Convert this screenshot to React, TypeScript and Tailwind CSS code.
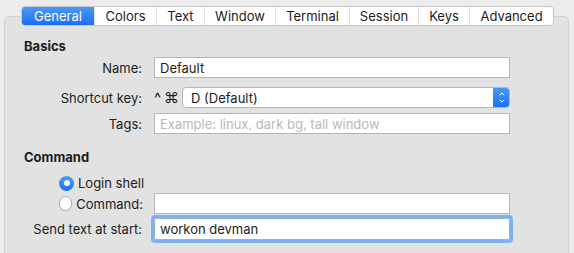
import { ChevronUp, ChevronDown } from 'lucide-react'

const tabs = [
  { label: 'General', w: 'w-[72px]' },
  { label: 'Colors', w: 'w-[62px]' },
  { label: 'Text', w: 'w-[48px]' },
  { label: 'Window', w: 'w-[71px]' },
  { label: 'Terminal', w: 'w-[74px]' },
  { label: 'Session', w: 'w-[69px]' },
  { label: 'Keys', w: 'w-[51px]' },
  { label: 'Advanced', w: 'w-[84px]' },
]

function Label({ children }: { children: React.ReactNode }) {
  return <div className="w-[138px] shrink-0 text-right pr-px">{children}</div>
}

function Field({ value, placeholder }: { value?: string; placeholder?: string }) {
  return (
    <div className="w-[356px] h-[21px] bg-white border border-[#b5b5b5] flex items-center px-[5px]">
      {value ? (
        <span className="text-[#1c1c1c]">{value}</span>
      ) : (
        <span className="text-[#b9b9b9]">{placeholder}</span>
      )}
    </div>
  )
}

function Radio({ checked, label }: { checked?: boolean; label: string }) {
  return (
    <div className="flex items-center gap-[4px]">
      {checked ? (
        <span className="w-[15px] h-[15px] rounded-full bg-gradient-to-b from-[#4d9bf9] to-[#1f72f4] flex items-center justify-center">
          <span className="w-[6px] h-[6px] rounded-full bg-white" />
        </span>
      ) : (
        <span className="w-[15px] h-[15px] rounded-full bg-white border border-[#a9a9a9]" />
      )}
      <span>{label}</span>
    </div>
  )
}

export default function App() {
  return (
    <div
      className="relative w-[574px] h-[253px] bg-[#ececec] overflow-hidden text-[13px] leading-[16px] text-[#1c1c1c]"
      style={{ fontFamily: 'Inter, "Noto Sans", sans-serif' }}
    >
      <div className="ml-[4px] mt-[16px] w-[565px] h-[260px] bg-[#e2e2e2] border border-[#d0d0d0] rounded-[5px] pt-[21px]">
        <div className="font-bold pl-[19px]">Basics</div>

        <div className="mt-[3px] flex items-center gap-[11px]">
          <Label>Name:</Label>
          <Field value="Default" />
        </div>

        <div className="mt-[9px] flex items-center gap-[11px]">
          <Label>Shortcut key:</Label>
          <div className="flex items-center">
            <span className="w-[28px] flex items-center gap-[3px] text-[15px]">
              <span>^</span>
              <span>⌘</span>
            </span>
            <div className="w-[328px] h-[21px] bg-white border border-[#b5b5b5] rounded-[4px] flex items-center overflow-hidden">
              <span className="flex-1 pl-[8px]">D (Default)</span>
              <div className="w-[17px] h-[21px] -mr-px bg-gradient-to-b from-[#4a99f9] to-[#1c6ef5] rounded-r-[4px] flex flex-col items-center justify-center">
                <ChevronUp className="w-[10px] h-[8px] text-white -mb-[1px]" strokeWidth={3} />
                <ChevronDown className="w-[10px] h-[8px] text-white" strokeWidth={3} />
              </div>
            </div>
          </div>
        </div>

        <div className="mt-[5px] flex items-center gap-[11px]">
          <Label>Tags:</Label>
          <Field placeholder="Example: linux, dark bg, tall window" />
        </div>

        <div className="mt-[15px] font-bold pl-[19px]">Command</div>

        <div className="mt-[10px] pl-[54px]">
          <Radio checked label="Login shell" />
        </div>

        <div className="mt-[2px] flex items-center">
          <div className="w-[138px] pl-[54px]">
            <Radio label="Command:" />
          </div>
          <div className="ml-[11px]">
            <Field />
          </div>
        </div>

        <div className="mt-[4px] flex items-center gap-[11px]">
          <Label>Send text at start:</Label>
          <div className="w-[356px] h-[22px] bg-white border border-[#8fb5e6] rounded-[1px] outline-[3px] outline-[#7eb1ee] flex items-center px-[5px]">
            workon devman
          </div>
        </div>
      </div>

      <div className="absolute left-[21px] top-[6px] flex h-[20px] bg-white border border-[#c6c6c6] rounded-[4px] overflow-hidden">
        {tabs.map((t, i) => (
          <div
            key={t.label}
            className={
              t.w +
              ' flex items-center justify-center ' +
              (i === 0
                ? 'bg-gradient-to-b from-[#4a99f9] to-[#1b6ef5] text-white'
                : 'text-[#1c1c1c] border-l border-[#e0e0e0]')
            }
          >
            {t.label}
          </div>
        ))}
      </div>
    </div>
  )
}
